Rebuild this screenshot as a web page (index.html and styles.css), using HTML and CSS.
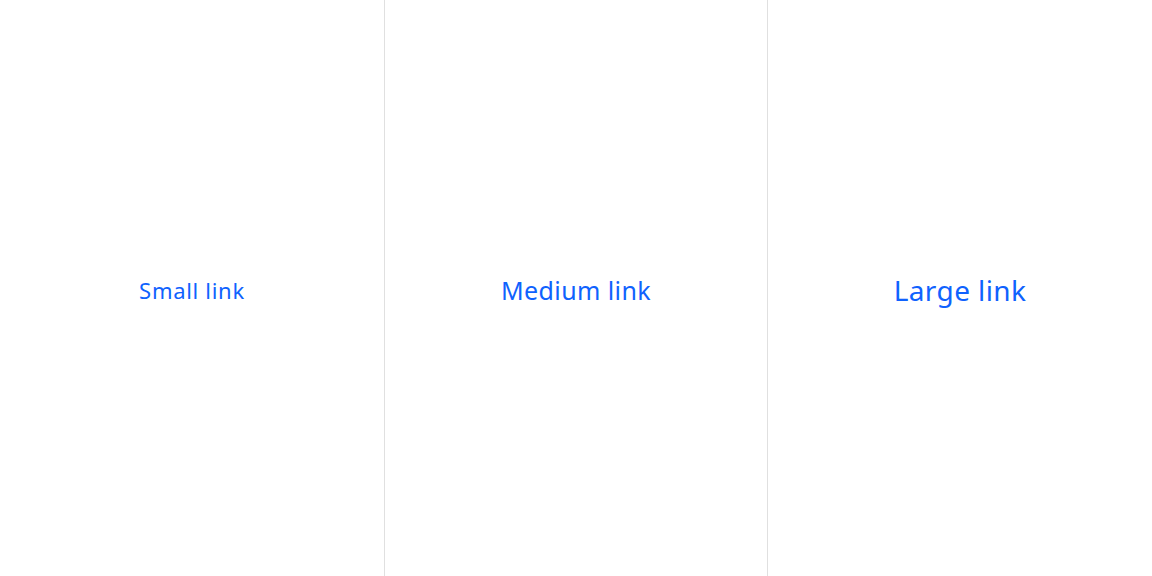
FILE: index.html
```html
<!DOCTYPE html>
<html>
<head>
<meta charset="utf-8">
<link rel="stylesheet" href="styles.css">
</head>
<body>
<div class="grid">
  <div class="cell"><a class="link link-sm" href="#">Small link</a></div>
  <div class="cell"><a class="link link-md" href="#">Medium link</a></div>
  <div class="cell"><a class="link link-lg" href="#">Large link</a></div>
</div>
</body>
</html>
```
FILE: styles.css
```css
html, body {
  margin: 0;
  padding: 0;
  background: #ffffff;
}
.grid {
  display: grid;
  grid-template-columns: 384px 383px 385px;
  height: 576px;
}
.cell {
  display: flex;
  align-items: center;
  justify-content: center;
  padding-top: 4px;
}
.cell + .cell {
  border-left: 1px solid #e0e0e0;
}
.link {
  font-family: "Noto Sans", sans-serif;
  color: #0f62fe;
  text-decoration: none;
  line-height: 1;
}
.link-sm { font-size: 22px; letter-spacing: 0.7px; }
.link-md { font-size: 25px; letter-spacing: 0.4px; }
.link-lg { font-size: 28px; letter-spacing: 0.4px; }
```
